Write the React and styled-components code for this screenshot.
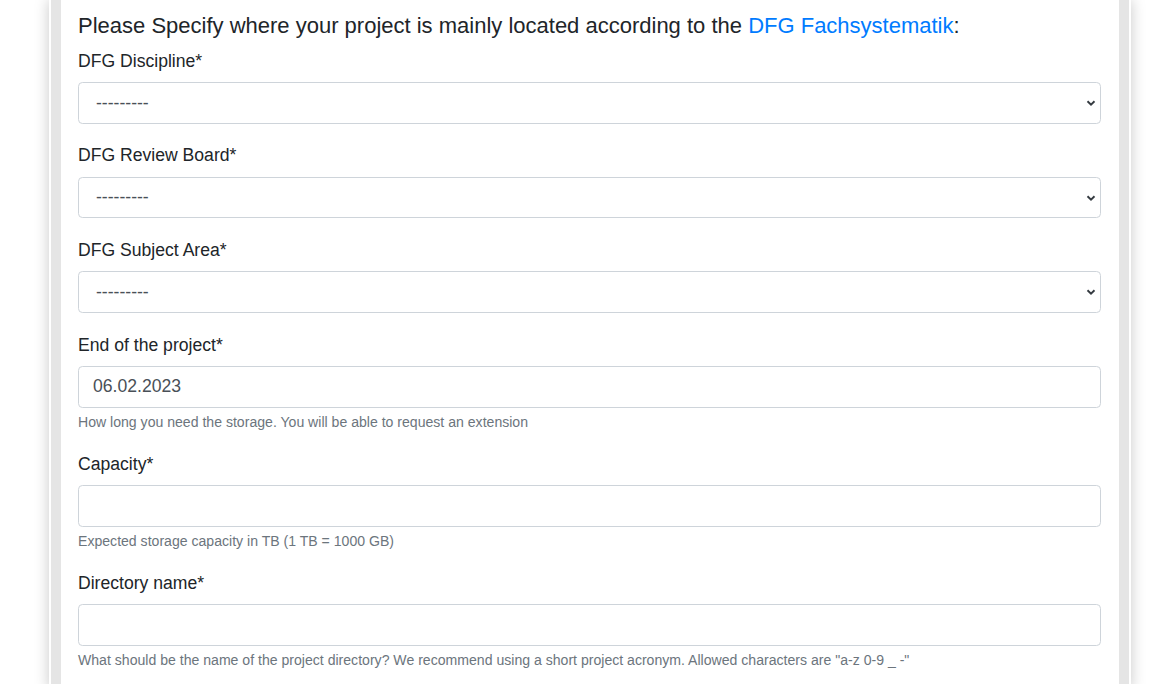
import styled, { createGlobalStyle } from "styled-components";

const GlobalStyle = createGlobalStyle`
  html, body {
    margin: 0;
    padding: 0;
    background: #fff;
    overflow: hidden;
  }
  body {
    font-family: "Liberation Sans", Arial, sans-serif;
    color: #212529;
  }
`;

const Page = styled.div`
  display: flex;
  min-height: 100vh;
  padding-left: 49px;
`;

const Shell = styled.div`
  width: 1082px;
  padding: 0 2px;
  box-sizing: border-box;
  background: #fff;
  box-shadow: 0 0 14px rgba(0, 0, 0, 0.22);
  display: flex;
`;

const Frame = styled.div`
  flex: 1;
  padding: 0 10px;
  background: #e5e5e5;
  display: flex;
`;

const Card = styled.div`
  flex: 1;
  background: #fff;
  padding: 13px 18px 0 17px;
`;

const Heading = styled.h5`
  margin: 0 0 8.4px;
  font-size: 22px;
  font-weight: 400;
  line-height: 26.4px;
`;

const Link = styled.a`
  color: #007bff;
  text-decoration: none;
`;

const Group = styled.div`
  margin-bottom: ${(p) => p.$mb || "18.6px"};
`;

const Label = styled.label`
  display: block;
  font-size: 17.6px;
  line-height: 26.4px;
  margin-bottom: 7.8px;
`;

const SelectWrap = styled.div`
  position: relative;
`;

const Select = styled.select`
  display: block;
  width: 100%;
  height: 41.8px;
  box-sizing: border-box;
  appearance: none;
  border: 1px solid #ced4da;
  border-radius: 4.4px;
  background: #fff;
  padding: 0 30px 0 17px;
  font-family: "Liberation Sans", Arial, sans-serif;
  font-size: 17.6px;
  color: #495057;
`;

const Chevron = styled.svg`
  position: absolute;
  right: 5px;
  top: 16px;
  width: 10px;
  height: 10px;
  pointer-events: none;
`;

const Input = styled.input`
  display: block;
  width: 100%;
  height: 41.8px;
  box-sizing: border-box;
  border: 1px solid #ced4da;
  border-radius: 4.4px;
  background: #fff;
  padding: 0 14px;
  font-family: "Liberation Sans", Arial, sans-serif;
  font-size: 17.6px;
  color: #495057;
  outline: none;
`;

const Help = styled.small`
  display: block;
  margin-top: 4.4px;
  font-size: 14.08px;
  line-height: 21.1px;
  color: #6c757d;
`;

const SelectField = ({ label }) => (
  <Group>
    <Label>{label}</Label>
    <SelectWrap>
      <Select defaultValue="">
        <option value="">---------</option>
      </Select>
      <Chevron viewBox="0 0 10 10">
        <path d="M1.5 3.2 L5 6.6 L8.5 3.2" fill="none" stroke="#343a40" strokeWidth="1.9" />
      </Chevron>
    </SelectWrap>
  </Group>
);

const InputField = ({ label, value, help, mb }) => (
  <Group $mb={mb}>
    <Label>{label}</Label>
    <Input type="text" defaultValue={value} />
    <Help>{help}</Help>
  </Group>
);

export default function App() {
  return (
    <>
      <GlobalStyle />
      <Page>
        <Shell>
          <Frame>
            <Card>
              <Heading>
                Please Specify where your project is mainly located according to the{" "}
                <Link href="#">DFG Fachsystematik</Link>:
              </Heading>
              <SelectField label="DFG Discipline*" />
              <SelectField label="DFG Review Board*" />
              <SelectField label="DFG Subject Area*" />
              <InputField
                label="End of the project*"
                value="06.02.2023"
                help="How long you need the storage. You will be able to request an extension"
                mb="17.5px"
              />
              <InputField
                label="Capacity*"
                value=""
                help="Expected storage capacity in TB (1 TB = 1000 GB)"
                mb="17.5px"
              />
              <InputField
                label="Directory name*"
                value=""
                help={'What should be the name of the project directory? We recommend using a short project acronym. Allowed characters are "a-z 0-9 _ -"'}
              />
            </Card>
          </Frame>
        </Shell>
      </Page>
    </>
  );
}
